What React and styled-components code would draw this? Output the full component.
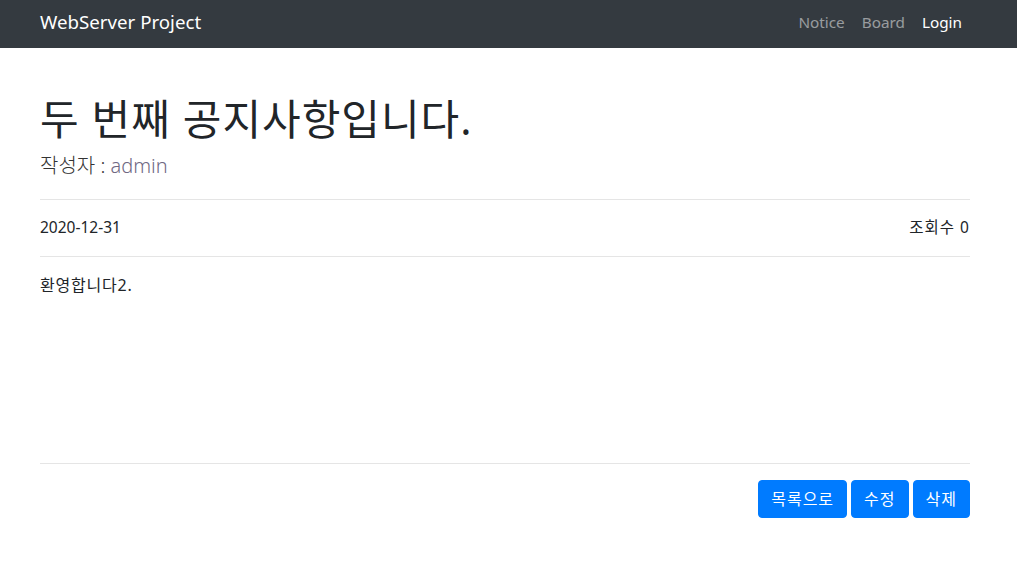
import styled, { createGlobalStyle } from "styled-components"

const GlobalStyle = createGlobalStyle`
  body {
    margin: 0;
    font-family: "Noto Sans", "Noto Sans CJK KR", sans-serif;
    font-size: 16px;
    line-height: 1.5;
    color: #212529;
    background: #fff;
  }
`

export default function App(){
  return (
    <>
      <GlobalStyle />
      <NavBar>
        <Brand href="#">WebServer Project</Brand>
        <NavLinks>
          <NavLink href="#">Notice</NavLink>
          <NavLink href="#">Board</NavLink>
          <NavLink href="#" $active>Login</NavLink>
        </NavLinks>
      </NavBar>
      <Container>
        <Title>두 번째 공지사항입니다.</Title>
        <Writer>작성자 : <Muted>admin</Muted></Writer>
        <Divider />
        <MetaRow>
          <MetaItem>2020-12-31</MetaItem>
          <MetaItem $korean>조회수 0</MetaItem>
        </MetaRow>
        <Divider />
        <Content>환영합니다2.</Content>
        <Divider />
        <ButtonGroup>
          <Button>목록으로</Button>
          <Button>수정</Button>
          <Button>삭제</Button>
        </ButtonGroup>
      </Container>
    </>
  )
}

const NavBar = styled.nav`
  height: 48px;
  box-sizing: border-box;
  background-color: #343a40;
  display: flex;
  align-items: center;
  justify-content: space-between;
  padding: 0 55px 4px 40px;
`
const Brand = styled.a`
  color: #fff;
  font-size: 18.7px;
  text-decoration: none;
`
const NavLinks = styled.div`
  display: flex;
  gap: 17px;
`
const NavLink = styled.a`
  color: ${p => (p.$active ? "#fff" : "rgba(255,255,255,0.5)")};
  font-size: 15.3px;
  text-decoration: none;
`
const Container = styled.main`
  width: 930px;
  margin: 0 0 0 40px;
  padding-top: 46px;
`
const Title = styled.h1`
  margin: 0 0 10px;
  font-size: 42px;
  font-weight: 400;
  letter-spacing: 1px;
  line-height: 1.2;
`
const Writer = styled.h5`
  margin: 0 0 21px;
  font-size: 20px;
  font-weight: 300;
  line-height: 1.2;
  color: #333;
`
const Muted = styled.span`
  color: #6f6883;
`
const Divider = styled.hr`
  margin: 0;
  border: 0;
  border-top: 1px solid #e5e5e5;
`
const MetaRow = styled.div`
  display: flex;
  justify-content: space-between;
  padding: 16px 0;
  font-size: 15.5px;
`
const MetaItem = styled.span`
  letter-spacing: ${p => (p.$korean ? "1px" : "0")};
`
const Content = styled.div`
  padding: 16px 0;
  height: 174px;
  font-size: 16px;
  letter-spacing: 0.8px;
`
const ButtonGroup = styled.div`
  display: flex;
  justify-content: flex-end;
  gap: 4px;
  margin-top: 16px;
`
const Button = styled.button`
  background-color: #007bff;
  color: #fff;
  border: 1px solid #007bff;
  border-radius: 4px;
  padding: 6px 12px;
  font-family: inherit;
  font-size: 16px;
  letter-spacing: 1px;
  line-height: 24px;
  cursor: pointer;
`
